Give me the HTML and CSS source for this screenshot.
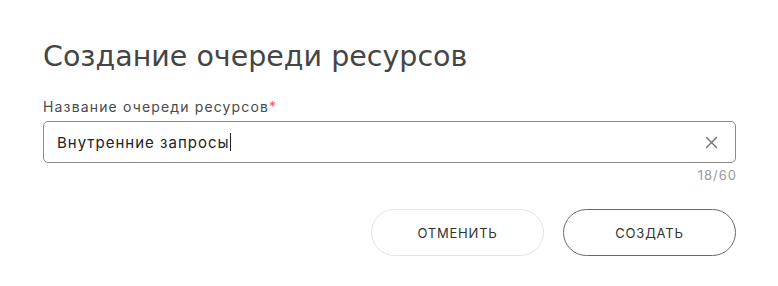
FILE: index.html
```html
<!DOCTYPE html>
<html lang="ru">
<head>
<meta charset="utf-8">
<link rel="stylesheet" href="styles.css">
</head>
<body>
<div class="dialog">
  <h1 class="title">Создание очереди ресурсов</h1>
  <div class="field">
    <label class="label">Название очереди ресурсов<span class="req">*</span></label>
    <div class="input">
      <span class="value">Внутренние запросы</span><span class="caret"></span>
      <svg class="clear" width="13" height="13" viewBox="0 0 13 13"><path d="M1.5 1.5L11.5 11.5M11.5 1.5L1.5 11.5" stroke="#6b7380" stroke-width="1.4" stroke-linecap="round"/></svg>
    </div>
    <div class="counter">18/60</div>
  </div>
  <div class="actions">
    <button class="btn btn-cancel">Отменить</button>
    <button class="btn btn-create">Создать</button>
  </div>
</div>
</body>
</html>
```
FILE: styles.css
```css
html, body { margin: 0; padding: 0; background: #fff; }
body { width: 778px; height: 286px; overflow: hidden; font-family: Inter, "Noto Sans", sans-serif; }
.dialog { padding: 39px 42px 0 43px; }
.title { margin: 0; font-family: "DejaVu Sans", sans-serif; font-weight: 400; font-size: 28.5px; line-height: 36px; color: #454545; }
.field { margin-top: 22px; }
.label { display: block; font-size: 14px; line-height: 20px; letter-spacing: 1.15px; color: #4a4a4a; }
.req { color: #f05454; }
.input { margin-top: 4px; height: 42px; box-sizing: border-box; border: 1px solid #8c8c8c; border-radius: 5px; display: flex; align-items: center; padding: 0 17px 0 13px; }
.value { font-size: 15px; letter-spacing: 1px; color: #222; }
.caret { width: 1px; height: 18px; background: #222; margin-left: 0; }
.clear { margin-left: auto; }
.counter { text-align: right; font-size: 13px; line-height: 16px; letter-spacing: 1px; color: #9a9a9a; margin-top: 4px; margin-right: -1px; }
.actions { display: flex; justify-content: flex-end; gap: 19px; margin-top: 26px; }
.btn { width: 173px; height: 47px; border-radius: 24px; background: #fff; font-family: Inter, sans-serif; font-size: 13px; letter-spacing: 0.8px; text-transform: uppercase; color: #333; cursor: pointer; }
.btn-cancel { border: 1px solid #e2e2ef; }
.btn-create { border: 1px solid #6a6a6a; }
```
